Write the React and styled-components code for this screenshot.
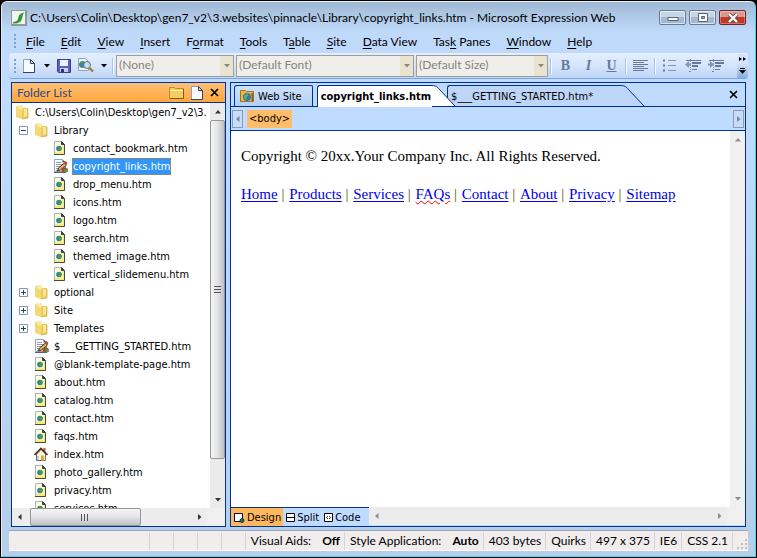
import React from "react";
import styled, { createGlobalStyle, css } from "styled-components";

const MENUS = [
  ["", "F", "ile"],
  ["", "E", "dit"],
  ["", "V", "iew"],
  ["", "I", "nsert"],
  ["F", "o", "rmat"],
  ["", "T", "ools"],
  ["T", "a", "ble"],
  ["", "S", "ite"],
  ["", "D", "ata View"],
  ["Tas", "k", " Panes"],
  ["", "W", "indow"],
  ["", "H", "elp"],
];

const TREE = [
  { name: "C:\\Users\\Colin\\Desktop\\gen7_v2\\3.", icon: "folder", level: 0 },
  { name: "Library", icon: "folder", level: 1, toggle: "minus" },
  { name: "contact_bookmark.htm", icon: "page", level: 2 },
  { name: "copyright_links.htm", icon: "edit", level: 2, selected: true },
  { name: "drop_menu.htm", icon: "page", level: 2 },
  { name: "icons.htm", icon: "page", level: 2 },
  { name: "logo.htm", icon: "page", level: 2 },
  { name: "search.htm", icon: "page", level: 2 },
  { name: "themed_image.htm", icon: "page", level: 2 },
  { name: "vertical_slidemenu.htm", icon: "page", level: 2 },
  { name: "optional", icon: "folder", level: 1, toggle: "plus" },
  { name: "Site", icon: "folder", level: 1, toggle: "plus" },
  { name: "Templates", icon: "folder", level: 1, toggle: "plus" },
  { name: "$___GETTING_STARTED.htm", icon: "edit", level: 1 },
  { name: "@blank-template-page.htm", icon: "page", level: 1 },
  { name: "about.htm", icon: "page", level: 1 },
  { name: "catalog.htm", icon: "page", level: 1 },
  { name: "contact.htm", icon: "page", level: 1 },
  { name: "faqs.htm", icon: "page", level: 1 },
  { name: "index.htm", icon: "home", level: 1 },
  { name: "photo_gallery.htm", icon: "page", level: 1 },
  { name: "privacy.htm", icon: "page", level: 1 },
  { name: "services.htm", icon: "page", level: 1 },
];

const LINKS = ["Home", "Products", "Services", "FAQs", "Contact", "About", "Privacy", "Sitemap"];

const FolderIcon = () => (
  <svg width="14" height="16" viewBox="0 0 14 16" aria-hidden="true">
    <path d="M1 2l5-1v13l-5-1z" fill="#f6e08a" />
    <path d="M3 1h5v10H3z" fill="#f9ebaa" />
    <path d="M8 4h5v10l-6 1V6z" fill="#e9ca5c" />
    <path d="M1 3l6 3v9l-6-2z" fill="#f3d873" />
    <path d="M9 5h3v7l-3 1z" fill="#f8e697" />
    <path d="M13 5v9l-6 1" fill="none" stroke="#cda93c" strokeWidth=".7" />
  </svg>
);

const PageIcon = () => (
  <svg width="14" height="16" viewBox="0 0 14 16" aria-hidden="true">
    <path d="M1.500 1.500h7l3 3v10h-10z" fill="#fffcd8" stroke="#a9b2c0" />
    <path d="M2 11.500h9V14H2z" fill="#f9ea86" />
    <path d="M9.500 5H11v9H9.500z" fill="#f9ea86" />
    <path d="M11.500 5v9.500H1" fill="none" stroke="#4a4a32" />
    <path d="M8.500 1.500v3h3z" fill="#35405a" stroke="#35405a" />
    <circle cx="6" cy="8.500" r="2.800" fill="#2b78b8" />
    <path d="M5 6.500l2-.5 1.500 1.500-.5 2.500-2 1-1-1.500z" fill="#3fa046" />
  </svg>
);

const EditIcon = () => (
  <svg width="16" height="16" viewBox="0 0 16 16" aria-hidden="true">
    <path d="M1.500 1.500h8l3 3v9h-11z" fill="#fbfcfe" stroke="#9aa5b5" />
    <path d="M9.500 1.500v3h3z" fill="#4b5873" />
    <path d="M3 4.500h5M3 6.500h7M3 8.500h5M3 10.500h4M3 12.500h4" stroke="#8d99b3" />
    <path d="M1 14.500h12" stroke="#555f70" />
    <path d="M4.500 13l1-3 6-5 2 2-6 5z" fill="#e6b64a" stroke="#3f3522" />
    <path d="M11 4.500l1.500-1.500 2 2-1.500 1.500z" fill="#c63b32" />
    <path d="M8 11l4-2 3 2-1 3H9z" fill="#b04438" />
    <path d="M12 10l3.500 3-2 1.500h-2.500z" fill="#4f9a48" />
  </svg>
);

const HomeIcon = () => (
  <svg width="14" height="16" viewBox="0 0 14 16" aria-hidden="true">
    <path d="M9.500 2h2v4h-2z" fill="#b35a3c" />
    <path d="M2.500 8L7 3.500 11.500 8v6.500h-9z" fill="#fff6d8" stroke="#6b6b6b" />
    <path d="M.5 9L7 2.500 13.500 9" fill="none" stroke="#4b3020" strokeWidth="1.600" />
    <path d="M7 9.500h3v5H7z" fill="#e8a33b" />
    <path d="M3 10h2v4H3z" fill="#bfd2ec" />
  </svg>
);

const ICONS = { folder: FolderIcon, page: PageIcon, edit: EditIcon, home: HomeIcon };

const LogoIcon = () => (
  <svg width="16" height="16" viewBox="0 0 16 16" aria-hidden="true">
    <path d="M0 0h16v16H0z" fill="#8f9a92" />
    <path d="M1 1h13v13H1z" fill="#f1f4f0" />
    <path d="M2 13.500c-.5-1 0-1.500 1.500-1.800C7 11 7 9 7.500 7S9.500 3 13.500 2.500C11 4.500 12 7 10.500 10S5 14 2 13.500z" fill="#2f9736" />
  </svg>
);

const BlankIcon = () => (
  <svg width="12" height="14" viewBox="0 0 12 14" aria-hidden="true">
    <path d="M.5.5h7l4 4v9H.5z" fill="#f7fafe" stroke="#8ea0bd" />
    <path d="M11.500 4v9.500H0" fill="none" stroke="#33456a" />
    <path d="M7.500.5v4h4z" fill="#c5d5ee" stroke="#33456a" />
  </svg>
);

const SaveIcon = () => (
  <svg width="14" height="14" viewBox="0 0 14 14" aria-hidden="true">
    <path d="M.5.5h13v13h-12l-1-1z" fill="#5c62c0" stroke="#3a3f94" />
    <path d="M3 1h8v6H3z" fill="#eef2fb" />
    <path d="M3 9h8v4H3z" fill="#c9cfe8" />
    <path d="M4 10h3v3H4z" fill="#2b3284" />
  </svg>
);

const PreviewIcon = () => (
  <svg width="16" height="15" viewBox="0 0 16 15" aria-hidden="true">
    <path d="M.5.5h7l3 3v9H.5z" fill="#f5f9fe" stroke="#8ea0bd" />
    <circle cx="4.500" cy="6.500" r="3.500" fill="#3f9d5c" />
    <path d="M1.500 6.500c2-2 3 0 4-3l1 3-3 3z" fill="#3d7bc0" />
    <circle cx="9" cy="7" r="3.500" fill="#c4e2ee" fillOpacity=".9" stroke="#5d6e80" />
    <path d="M11.500 10l3.500 3.500" stroke="#a9762e" strokeWidth="2.200" />
  </svg>
);

const OpenFolderIcon = () => (
  <svg width="15" height="13" viewBox="0 0 15 13" aria-hidden="true">
    <path d="M.5 1.500h5l1 1h8v10H.5z" fill="#f3cc62" stroke="#b98a34" />
    <path d="M1 4.500h13" stroke="#fff1b4" />
    <path d="M14.500 3v9.500H1" fill="none" stroke="#7e5a18" />
  </svg>
);

const SiteIcon = () => (
  <svg width="14" height="14" viewBox="0 0 14 14" aria-hidden="true">
    <path d="M.5 1.500h5l1 1h7v10H.5z" fill="#eeb93e" stroke="#9d741c" />
    <circle cx="7" cy="8" r="4" fill="#3476b8" />
    <path d="M4 7l3-2.500L8.500 6.500l-2 1.500v3l-2-1z" fill="#65b651" />
    <path d="M11.500 4H13v8h-1.500z" fill="#7e6420" />
  </svg>
);

const CloseIcon = () => (
  <svg width="9" height="9" viewBox="0 0 9 9" aria-hidden="true">
    <path d="M1 1l7 7M8 1L1 8" stroke="#000" strokeWidth="1.700" />
  </svg>
);

const Arrow = ({ dir = "down", color = "#000", size = 6 }) => {
  const paths = {
    down: "M0 1h6L3 4.500z",
    up: "M0 4.500h6L3 1z",
    left: "M4.500 0v6L1 3z",
    right: "M1 0v6l3.500-3z",
  };
  return (
    <svg width={size} height={size} viewBox="0 0 6 6" aria-hidden="true">
      <path d={paths[dir]} fill={color} />
    </svg>
  );
};

const AlignIcon = () => (
  <svg width="15" height="13" viewBox="0 0 15 13" aria-hidden="true">
    <path d="M0 1.500h15M0 3.500h11M0 5.500h15M0 7.500h11M0 9.500h15M0 11.500h11" stroke="#667b9c" />
  </svg>
);

const BulletsIcon = () => (
  <svg width="14" height="13" viewBox="0 0 14 13" aria-hidden="true">
    <path d="M5 1.500h8M5 6.500h8M5 11.500h8" stroke="#8497b4" />
    <path d="M0 1.500h2M0 6.500h2M0 11.500h2" stroke="#667b9c" strokeWidth="2" />
  </svg>
);

const IndentIcon = ({ out }) => (
  <svg width="16" height="13" viewBox="0 0 16 13" aria-hidden="true">
    <path d="M1 1.500h15M7 10.500h5M4 12.500h2" stroke="#667b9c" />
    <path d="M7 4h9M7 7h6" stroke="#667b9c" strokeWidth="2" />
    <path d={out ? "M0 5.500L4 2v2.500h2v2H4V9z" : "M6 5.500L2 2v2.500H0v2h2V9z"} fill="#7f93b3" />
    <path d="M5.500 0v13" stroke="#7f93b3" strokeDasharray="1 1" />
  </svg>
);

const TabSlant = ({ active }) => (
  <Slant viewBox="0 0 23 21" aria-hidden="true">
    <path d="M0 0C5 0 6 3 8 5L23 21H0z" fill={active ? "#fff" : "#bdd6f8"} />
    <path d="M0 .5C5 .5 6 3 8 5L23 21" fill="none" stroke="#00309c" />
  </Slant>
);

const Combo = ({ label, value, width }) => (
  <ComboBox $width={width}>
    <select aria-label={label} disabled>
      <option>{value}</option>
    </select>
    <ComboArrow>
      <Arrow color="#8a8a80" />
    </ComboArrow>
  </ComboBox>
);

const TreeRow = ({ item }) => {
  const Icon = ICONS[item.icon];
  return (
    <TreeItem $level={item.level}>
      {item.level === 1 && (
        <ToggleSlot>
          {item.toggle && (
            <Toggle aria-label={`Toggle ${item.name}`}>
              <svg width="9" height="9" viewBox="0 0 9 9" aria-hidden="true">
                <path d="M.5.5h8v8h-8z" fill="#fff" stroke="#8795a8" />
                <path d={item.toggle === "plus" ? "M2 4.500h5M4.500 2v5" : "M2 4.500h5"} stroke="#2b3f74" />
              </svg>
            </Toggle>
          )}
        </ToggleSlot>
      )}
      <IconSlot>
        <Icon />
      </IconSlot>
      <TreeName $selected={item.selected}>{item.name}</TreeName>
    </TreeItem>
  );
};

const App = () => {
  return (
    <Screen>
      <GlobalStyle />
      <Frame>
        <TitleBar>
          <LogoIcon />
          <Title>
            C:\Users\Colin\Desktop\gen7_v2\3.websites\pinnacle\Library\copyright_links.htm - Microsoft
            Expression Web
          </Title>
          <WindowButton aria-label="Minimize">
            <svg width="12" height="8" viewBox="0 0 12 8" aria-hidden="true">
              <path d="M1 3.500h10v3H1z" fill="#fff" stroke="#57616f" />
            </svg>
          </WindowButton>
          <WindowButton aria-label="Maximize">
            <svg width="12" height="10" viewBox="0 0 12 10" aria-hidden="true">
              <path d="M1.500.5h9v8h-9zM4.500 3.500h3v2h-3z" fill="#fff" fillRule="evenodd" stroke="#57616f" />
            </svg>
          </WindowButton>
          <WindowButton $close aria-label="Close">
            <svg width="12" height="10" viewBox="0 0 12 10" aria-hidden="true">
              <path d="M2 1l8 8M10 1L2 9" stroke="#6b4a50" strokeWidth="4" />
              <path d="M2 1l8 8M10 1L2 9" stroke="#fff" strokeWidth="2.400" />
            </svg>
          </WindowButton>
        </TitleBar>

        <MenuBar>
          <Grip />
          {MENUS.map(([before, key, after]) => (
            <MenuButton key={before + key + after}>
              {before}
              <u>{key}</u>
              {after}
            </MenuButton>
          ))}
        </MenuBar>

        <Toolbar>
          <Grip />
          <ToolGroup>
            <ToolButton $width={22} aria-label="New document">
              <BlankIcon />
            </ToolButton>
            <ToolButton $width={13} aria-label="New document options">
              <Arrow />
            </ToolButton>
            <ToolButton $width={22} aria-label="Save">
              <SaveIcon />
            </ToolButton>
            <ToolButton $width={22} aria-label="Preview">
              <PreviewIcon />
            </ToolButton>
            <ToolButton $width={13} aria-label="Preview options">
              <Arrow />
            </ToolButton>
          </ToolGroup>
          <Separator />
          <Combos>
            <Combo label="Style" value="(None)" width={118} />
            <Combo label="Font" value="(Default Font)" width={178} />
            <Combo label="Font size" value="(Default Size)" width={132} />
          </Combos>
          <Separator />
          <ToolButton $letter="bold">B</ToolButton>
          <ToolButton $letter="italic">I</ToolButton>
          <ToolButton $letter="underline">U</ToolButton>
          <Separator />
          <ToolButton aria-label="Align left">
            <AlignIcon />
          </ToolButton>
          <Separator />
          <ToolButton aria-label="Bullets">
            <BulletsIcon />
          </ToolButton>
          <ToolButton aria-label="Decrease indent">
            <IndentIcon out />
          </ToolButton>
          <ToolButton aria-label="Increase indent">
            <IndentIcon />
          </ToolButton>
          <Overflow aria-label="More buttons">
            <svg width="8" height="17" viewBox="0 0 8 17" aria-hidden="true">
              <path d="M0 0l3 2-3 2zM4 0l3 2-3 2zM1 11h5v1H1zM0 13h7l-3.500 4z" fill="#000" />
            </svg>
          </Overflow>
        </Toolbar>

        <Workspace>
          <SidePanel>
            <PanelHeader>
              <PanelTitle>Folder List</PanelTitle>
              <PlainButton aria-label="New folder">
                <OpenFolderIcon />
              </PlainButton>
              <PlainButton aria-label="New page">
                <BlankIcon />
              </PlainButton>
              <PlainButton aria-label="Close folder list">
                <CloseIcon />
              </PlainButton>
            </PanelHeader>
            <PanelBody>
              <Tree>
                {TREE.map((item) => (
                  <TreeRow key={item.name} item={item} />
                ))}
              </Tree>
              <VScroll>
                <ScrollEnd>
                  <Arrow dir="up" color="#333" />
                </ScrollEnd>
                <VThumb>
                  <svg width="7" height="8" viewBox="0 0 7 8" aria-hidden="true">
                    <path d="M0 .5h7M0 3.500h7M0 6.500h7" stroke="#555" />
                  </svg>
                </VThumb>
                <VTrack />
                <ScrollEnd>
                  <Arrow dir="down" color="#333" />
                </ScrollEnd>
              </VScroll>
            </PanelBody>
            <HScroll>
              <ScrollEnd>
                <Arrow dir="left" color="#333" />
              </ScrollEnd>
              <HThumb>
                <svg width="8" height="7" viewBox="0 0 8 7" aria-hidden="true">
                  <path d="M.5 0v7M3.500 0v7M6.500 0v7" stroke="#555" />
                </svg>
              </HThumb>
              <HTrack />
              <ScrollEnd>
                <Arrow dir="right" color="#333" />
              </ScrollEnd>
              <Corner />
            </HScroll>
          </SidePanel>

          <Editor>
            <TabBar>
              <SiteTab>
                <SiteIcon />
                Web Site
              </SiteTab>
              <FileTab $active>
                <TabLabel $active>copyright_links.htm</TabLabel>
                <TabSlant active />
              </FileTab>
              <FileTab>
                <TabLabel>$___GETTING_STARTED.htm*</TabLabel>
                <TabSlant />
              </FileTab>
              <TabClose aria-label="Close tab">
                <CloseIcon />
              </TabClose>
            </TabBar>
            <TagBar>
              <TagArrow aria-label="Scroll tags left">
                <Arrow dir="left" color="#7c8799" />
              </TagArrow>
              <TagButton>&lt;body&gt;</TagButton>
              <TagArrow aria-label="Scroll tags right">
                <Arrow dir="right" color="#7c8799" />
              </TagArrow>
            </TagBar>
            <Canvas>
              <Page>
                <p>Copyright © 20xx.Your Company Inc. All Rights Reserved.</p>
                <p>
                  {LINKS.map((link, i) => (
                    <React.Fragment key={link}>
                      {i > 0 && <Bar> | </Bar>}
                      <PageLink href="#" $misspelt={link === "FAQs"}>
                        {link}
                      </PageLink>
                    </React.Fragment>
                  ))}
                </p>
              </Page>
              <VScroll $idle>
                <ScrollEnd>
                  <Arrow dir="up" color="#8c8c8c" />
                </ScrollEnd>
                <VTrack />
                <ScrollEnd>
                  <Arrow dir="down" color="#8c8c8c" />
                </ScrollEnd>
              </VScroll>
            </Canvas>
            <ViewBar>
              <Views>
                <ViewButton $active>
                  <svg width="11" height="11" viewBox="0 0 11 11" aria-hidden="true">
                    <path d="M.5 1.500h8v8h-8z" fill="#fff" stroke="#000" />
                    <circle cx="8" cy="8.500" r="2" fill="#1c6b5c" stroke="#103a50" />
                  </svg>
                  Design
                </ViewButton>
                <ViewButton>
                  <svg width="9" height="11" viewBox="0 0 9 11" aria-hidden="true">
                    <path d="M.5 1.500h8v8h-8zM1 5.500h7" fill="#fff" stroke="#000" />
                  </svg>
                  Split
                </ViewButton>
                <ViewButton>
                  <svg width="9" height="11" viewBox="0 0 9 11" aria-hidden="true">
                    <path d="M.5 1.500h8v8h-8z" fill="#fff" stroke="#000" />
                    <path d="M4 4L2.500 5.500 4 7M5 4l1.500 1.500L5 7" fill="none" stroke="#000" strokeWidth=".8" />
                  </svg>
                  Code
                </ViewButton>
              </Views>
              <HScroll>
                <ScrollEnd>
                  <Arrow dir="left" color="#8c8c8c" />
                </ScrollEnd>
                <HTrack />
                <ScrollEnd>
                  <Arrow dir="right" color="#8c8c8c" />
                </ScrollEnd>
                <Corner />
              </HScroll>
            </ViewBar>
          </Editor>
        </Workspace>

        <StatusBar>
          <StatusCell $width={24} />
          <StatusCell $width={24} />
          <StatusCell $width={24} />
          <StatusCell $width={24} />
          <StatusCell>
            Visual Aids: <b>Off</b>
          </StatusCell>
          <StatusCell>
            Style Application: <b>Auto</b>
          </StatusCell>
          <StatusCell>403 bytes</StatusCell>
          <StatusCell>Quirks</StatusCell>
          <StatusCell>497 x 375</StatusCell>
          <StatusCell>IE6</StatusCell>
          <StatusCell>CSS 2.1</StatusCell>
          <SizeGrip>
            <svg width="11" height="11" viewBox="0 0 11 11" aria-hidden="true">
              <path d="M8 0h2v2H8zM4 4h2v2H4zM8 4h2v2H8zM0 8h2v2H0zM4 8h2v2H4zM8 8h2v2H8z" fill="#c3bfbf" />
            </svg>
          </SizeGrip>
        </StatusBar>
      </Frame>
    </Screen>
  );
};

export default App;

const GlobalStyle = createGlobalStyle`
  * {
    box-sizing: border-box;
  }

  body {
    margin: 0;
    background: #000000;
    font-family: Lato, "Noto Sans", sans-serif;
    font-size: 12px;
    color: #000000;
  }

  button {
    padding: 0;
    border: none;
    background: none;
    font: inherit;
    color: inherit;
    white-space: nowrap;
  }

  svg {
    display: block;
    flex: none;
  }
`;

const smallText = css`
  font-family: "DejaVu Sans Condensed", "DejaVu Sans", sans-serif;
  font-size: 11px;
`;

const Screen = styled.div`
  display: flex;
  height: 100vh;
  padding: 1px;
`;

const Frame = styled.main`
  display: flex;
  flex-direction: column;
  flex: 1;
  min-width: 0;
  padding: 0 7px 5px;
  border: 1px solid #3ddcf5;
  border-top-color: #e8f2fb;
  border-left-color: #dcecfb;
  border-radius: 6px 6px 0 0;
  background: linear-gradient(#9fb9d4 0, #bfd9fa 30px, #bfdbff 80px, #b5cfea 100%);
`;

const TitleBar = styled.header`
  display: flex;
  align-items: center;
  height: 29px;
  padding: 2px 2px 0;
  gap: 3px;
`;

const Title = styled.h1`
  flex: 1;
  margin: 0;
  overflow: hidden;
  font-size: 12px;
  font-weight: 400;
  white-space: nowrap;
`;

const WindowButton = styled.button`
  display: flex;
  align-items: center;
  justify-content: center;
  width: 27px;
  height: 15px;
  border: 1px solid #67788f;
  border-radius: 2px;
  box-shadow: inset 0 0 0 1px rgba(255, 255, 255, 0.6);
  background: linear-gradient(#c5d6e9 50%, #a3b9d1 50%);

  ${({ $close }) =>
    $close &&
    css`
      border-color: #6b2530;
      background: linear-gradient(#dc9a8f 50%, #bd3b27 50%);
      box-shadow: inset 0 0 0 1px rgba(255, 255, 255, 0.3);
    `}
`;

const MenuBar = styled.nav`
  display: flex;
  align-items: center;
  height: 20px;
  padding-left: 5px;
`;

const Grip = styled.span`
  width: 2px;
  height: 14px;
  margin-right: 2px;
  background: repeating-linear-gradient(#7ba0d4 0 2px, transparent 2px 4px);
`;

const MenuButton = styled.button`
  padding: 0 8px;

  u {
    text-underline-offset: 2px;
  }
`;

const Toolbar = styled.div`
  display: flex;
  align-items: center;
  height: 26px;
  margin: 2px 0 3px;
  padding-left: 5px;
  border-bottom: 1px solid #7ba4e0;
  border-radius: 3px;
  background: linear-gradient(#e4effd, #d5e5fb 50%, #bfd6f7);
`;

const ToolGroup = styled.div`
  display: flex;
  align-items: center;
`;

const ToolButton = styled.button`
  display: flex;
  align-items: center;
  justify-content: center;
  width: ${({ $width = 23 }) => $width}px;
  height: 22px;

  ${({ $letter }) =>
    $letter &&
    css`
      font-family: "Liberation Serif", serif;
      font-size: 14px;
      font-weight: 700;
      font-style: ${$letter === "italic" ? "italic" : "normal"};
      text-decoration: ${$letter === "underline" ? "underline" : "none"};
      color: #667b9c;
    `}
`;

const Separator = styled.span`
  width: 2px;
  height: 16px;
  margin: 0 2px;
  border-left: 1px solid #a9c4e8;
  border-right: 1px solid #f8fbff;
`;

const Combos = styled.div`
  display: flex;
  gap: 2px;
`;

const ComboBox = styled.div`
  display: flex;
  position: relative;
  width: ${({ $width }) => $width}px;

  select {
    appearance: none;
    width: 100%;
    height: 22px;
    padding: 0 16px 2px 2px;
    border: 1px solid #a09e96;
    border-radius: 0;
    background: #f0eeea;
    font: inherit;
    color: #85837e;
    opacity: 1;
  }
`;

const ComboArrow = styled.span`
  display: flex;
  position: absolute;
  top: 1px;
  right: 1px;
  bottom: 1px;
  align-items: center;
  justify-content: center;
  width: 13px;
  background: #e9e4cf;
  pointer-events: none;
`;

const Overflow = styled.button`
  display: flex;
  align-items: center;
  justify-content: center;
  width: 11px;
  height: 24px;
  margin-left: auto;
  border-radius: 0 3px 3px 0;
  background: linear-gradient(#d3e4fb 40%, #86ade2);
`;

const Workspace = styled.div`
  display: flex;
  flex: 1;
  gap: 4px;
  min-height: 0;
  padding: 0 2px 3px;
`;

const SidePanel = styled.section`
  display: flex;
  flex-direction: column;
  flex: none;
  width: 215px;
  border: 1px solid #00309c;
  background: #ffffff;
`;

const PanelHeader = styled.header`
  display: flex;
  align-items: center;
  gap: 7px;
  height: 20px;
  padding: 0 6px 0 5px;
  border-bottom: 1px solid #00309c;
  background: linear-gradient(#ffc173, #ffa63f);
`;

const PanelTitle = styled.h2`
  flex: 1;
  margin: 0;
  font-size: 12px;
  font-weight: 400;
  color: #2d4a8c;
`;

const PlainButton = styled.button`
  display: flex;
`;

const PanelBody = styled.div`
  display: flex;
  flex: 1;
  min-height: 0;
`;

const Tree = styled.ul`
  flex: 1;
  min-width: 0;
  margin: 0;
  padding: 0;
  overflow: hidden;
  list-style: none;
  ${smallText}
`;

const TreeItem = styled.li`
  display: flex;
  align-items: center;
  height: 18px;
  padding-left: ${({ $level }) => [3, 7, 41][$level]}px;
`;

const ToggleSlot = styled.span`
  display: flex;
  width: 15px;
`;

const Toggle = styled.button`
  display: flex;
`;

const IconSlot = styled.span`
  display: flex;
  flex: none;
  width: 19px;
`;

const TreeName = styled.button`
  height: 17px;
  padding: 0 1px;

  ${({ $selected }) =>
    $selected &&
    css`
      outline: 1px dotted #cc7a20;
      outline-offset: -1px;
      background: #3096fa;
      color: #ffffff;
    `}
`;

const VScroll = styled.div`
  display: flex;
  flex-direction: column;
  flex: none;
  width: 15px;
  background: ${({ $idle }) => ($idle ? "#f0f0f0" : "#ebebeb")};
`;

const HScroll = styled.div`
  display: flex;
  flex: 1;
  max-height: 18px;
  min-height: 16px;
  background: #ececec;
`;

const ScrollEnd = styled.span`
  display: flex;
  flex: none;
  align-items: center;
  justify-content: center;
  min-width: 15px;
  min-height: 17px;
`;

const VThumb = styled.div`
  display: flex;
  flex: 340;
  align-items: center;
  justify-content: center;
  border: 1px solid #979797;
  border-radius: 2px;
  background: linear-gradient(to right, #f5f5f5, #e3e4e5 50%, #bfc0c3);
`;

const VTrack = styled.div`
  flex: 32;
`;

const HThumb = styled.div`
  display: flex;
  flex: 110;
  align-items: center;
  justify-content: center;
  margin-left: 3px;
  border: 1px solid #979797;
  border-radius: 2px;
  background: linear-gradient(#f5f5f5, #e3e4e5 50%, #bfc0c3);
`;

const HTrack = styled.div`
  flex: 52;
`;

const Corner = styled.span`
  width: 18px;
  background: #f0f0f0;
`;

const Editor = styled.section`
  display: flex;
  flex-direction: column;
  flex: 1;
  min-width: 0;
  border: 1px solid #00309c;
  background: #bfdbff;
`;

const TabBar = styled.div`
  display: flex;
  align-items: flex-end;
  height: 24px;
  padding-left: 3px;
  border-bottom: 1px solid #00309c;
  ${smallText}
`;

const SiteTab = styled.button`
  display: flex;
  align-items: center;
  gap: 4px;
  height: 21px;
  margin-right: 4px;
  padding: 0 10px 0 5px;
  border: 1px solid #00309c;
  border-bottom: none;
  border-radius: 3px 2px 0 0;
  background: linear-gradient(#cfe2fc, #b3cff5);
`;

const FileTab = styled.button`
  display: flex;
  position: relative;
  z-index: ${({ $active }) => ($active ? 1 : 0)};
  height: ${({ $active }) => ($active ? "22px" : "21px")};
  margin-right: -8px;
  margin-bottom: ${({ $active }) => ($active ? "-1px" : 0)};
`;

const TabLabel = styled.span`
  display: flex;
  align-items: center;
  height: 100%;
  padding: 0 ${({ $active }) => ($active ? 1 : 28)}px 0 3px;
  border-top: 1px solid #00309c;
  border-left: 1px solid #00309c;
  border-top-left-radius: 3px;
  background: ${({ $active }) => ($active ? "#ffffff" : "#bdd6f8")};
  font-weight: ${({ $active }) => ($active ? 700 : 400)};
`;

const Slant = styled.svg`
  width: 23px;
  height: 21px;
`;

const TabClose = styled.button`
  display: flex;
  align-self: center;
  margin-left: auto;
  margin-right: 7px;
`;

const TagBar = styled.div`
  display: flex;
  align-items: center;
  gap: 4px;
  height: 24px;
  padding: 0 1px;
  border-bottom: 1px solid #00309c;
`;

const TagArrow = styled.button`
  display: flex;
  align-items: center;
  justify-content: center;
  width: 11px;
  height: 18px;
  border: 1px solid #8c9bb2;
  background: #c5dcfb;

  &:last-child {
    margin-left: auto;
  }
`;

const TagButton = styled.button`
  height: 18px;
  padding: 0 2px;
  background: #ffbd69;
  ${smallText}
`;

const Canvas = styled.div`
  display: flex;
  flex: 1;
  min-height: 0;
  background: #ffffff;
`;

const Page = styled.article`
  flex: 1;
  min-width: 0;
  padding: 16px 10px;
  overflow: hidden;
  font-family: "Liberation Serif", "Times New Roman", serif;
  font-size: 15px;
  line-height: 19px;

  p {
    margin: 0 0 19px;
  }
`;

const PageLink = styled.a`
  color: #0000ee;
  text-underline-offset: 2px;

  ${({ $misspelt }) =>
    $misspelt &&
    css`
      text-decoration: underline wavy #ff0000 1px;
      text-underline-offset: 1px;
    `}
`;

const Bar = styled.span`
  padding-right: 1px;
  color: #555500;
`;

const ViewBar = styled.footer`
  display: flex;
  height: 19px;
`;

const Views = styled.div`
  display: flex;
  flex: none;
  width: 138px;
  border-top: 1px solid #00309c;
  ${smallText}
`;

const ViewButton = styled.button`
  display: flex;
  align-items: center;
  gap: 2px;
  padding: 0 2px 0 3px;
  background: ${({ $active }) => ($active ? "#ffb85c" : "transparent")};
`;

const StatusBar = styled.footer`
  display: flex;
  align-items: center;
  justify-content: flex-end;
  height: 21px;
  border-top: 1px solid #9aa5b5;
  border-bottom: 1px solid #ffffff;
  background: #f1eded;
`;

const StatusCell = styled.span`
  flex: none;
  width: ${({ $width }) => ($width ? `${$width}px` : "auto")};
  height: 18px;
  padding: 0 4px 0 5px;
  border-left: 1px solid #d9d3d3;
  line-height: 18px;
  white-space: nowrap;

  b {
    margin-left: 8px;
  }
`;

const SizeGrip = styled.span`
  display: flex;
  align-items: flex-end;
  justify-content: flex-end;
  width: 16px;
  height: 18px;
  border-left: 1px solid #d9d3d3;
`;
